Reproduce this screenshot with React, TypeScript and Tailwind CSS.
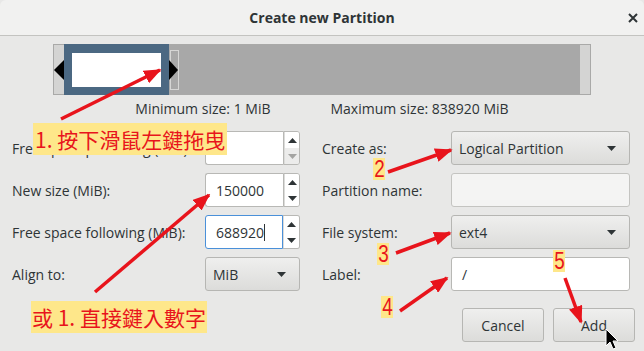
import React from 'react';

const ui = "font-['Open_Sans','Noto_Sans',sans-serif]";
const cjk = "font-['Noto_Sans_CJK_TC','Noto_Sans_CJK_SC',sans-serif]";

function Up({ dim }: { dim?: boolean }) {
  return (
    <svg width="9" height="5" viewBox="0 0 9 5">
      <path d="M0 5 L4.5 0 L9 5 Z" fill={dim ? '#a4a4a2' : '#2e3436'} />
    </svg>
  );
}

function Down({ dim }: { dim?: boolean }) {
  return (
    <svg width="9" height="5" viewBox="0 0 9 5">
      <path d="M0 0 L9 0 L4.5 5 Z" fill={dim ? '#a4a4a2' : '#2e3436'} />
    </svg>
  );
}

function Spin({ value, focused, downDisabled }: { value: string; focused?: boolean; downDisabled?: boolean }) {
  return (
    <div className="flex w-[95px] h-[34px]">
      <div
        className={`flex-1 flex items-center pl-[10px] bg-white rounded-l-[3px] border ${
          focused ? 'border-[#4a90d9]' : 'border-[#b8b8b5] border-r-0'
        }`}
      >
        {value}
        {focused && <span className="inline-block w-[1px] h-[17px] bg-[#2e3436]" />}
      </div>
      <div className={`w-[17px] flex flex-col rounded-r-[3px] border border-[#b8b8b5] overflow-hidden ${focused ? 'border-l-0' : ''}`}>
        <div className="flex-1 flex items-center justify-center bg-white border-l border-[#dcdcda]">
          <Up />
        </div>
        <div
          className={`flex-1 flex items-center justify-center border-l border-[#dcdcda] ${
            downDisabled ? 'bg-[#ececeb]' : 'bg-white'
          }`}
        >
          <Down dim={downDisabled} />
        </div>
      </div>
    </div>
  );
}

function Combo({ value, width }: { value: string; width: string }) {
  return (
    <div
      className={`${width} h-[34px] flex items-center justify-between pl-[7px] pr-[13px] rounded-[3px] border border-[#b6b6b3] bg-gradient-to-b from-[#efefee] to-[#dcdcda]`}
    >
      <span>{value}</span>
      <Down />
    </div>
  );
}

function Row({ label, children }: { label: string; children: React.ReactNode }) {
  return (
    <div className="flex items-center justify-between h-[34px]">
      <span>{label}</span>
      {children}
    </div>
  );
}

function PartitionBar() {
  return (
    <svg width="538" height="51" viewBox="0 0 538 51" className="mx-auto block">
      <rect x="0.5" y="0.5" width="537" height="50" fill="#d4d4d3" stroke="#a9a9a8" />
      <rect x="11" y="0" width="105" height="51" fill="#4b6882" />
      <rect x="19" y="9" width="89" height="34" fill="#ffffff" />
      <rect x="116" y="1" width="411" height="49" fill="#a8a8a8" />
      <rect x="117.5" y="6.5" width="8" height="39" fill="#a8a8a8" stroke="#d6d6d5" />
      <path d="M1 26 L11 16 L11 36 Z" fill="#000" />
      <path d="M116 16 L125 26 L116 36 Z" fill="#000" />
    </svg>
  );
}

function Num({ n, pos }: { n: string; pos: string }) {
  return (
    <span
      className={`absolute ${pos} w-[12px] h-[22px] flex items-center justify-center text-[23px] leading-[22px] text-[#e8141c] bg-[#fee78a] font-['Liberation_Sans',sans-serif]`}
    >
      <span className="inline-block scale-x-[0.82]">{n}</span>
    </span>
  );
}

export default function App() {
  return (
    <div className={`relative w-[644px] h-[351px] overflow-hidden bg-[#e8e8e7] text-[14px] text-[#2e3436] ${ui}`}>
      {/* Title bar */}
      <div className="relative h-[36px] flex items-center justify-center bg-[#f1f1f0] border-b border-[#c3c3c0] rounded-t-[6px]">
        <span className="font-bold text-[14px]">Create new Partition</span>
        <svg width="10" height="10" viewBox="0 0 10 10" className="absolute right-[6px] top-[13px]">
          <path d="M1 1 L9 9 M9 1 L1 9" stroke="#2e3436" strokeWidth="2" />
        </svg>
      </div>

      <div className="mt-[8px]">
        <PartitionBar />
      </div>

      <div className="flex justify-center gap-[60px] mt-[4px] leading-[20px]">
        <span>Minimum size: 1 MiB</span>
        <span>Maximum size: 838920 MiB</span>
      </div>

      {/* Form */}
      <div className="flex px-[12px] mt-[12px]">
        <div className="w-[288px] flex flex-col gap-[8px]">
          <Row label="Free space preceding (MiB):">
            <Spin value="" downDisabled />
          </Row>
          <Row label="New size (MiB):">
            <Spin value="150000" />
          </Row>
          <Row label="Free space following (MiB):">
            <Spin value="688920" focused />
          </Row>
          <Row label="Align to:">
            <Combo value="MiB" width="w-[95px]" />
          </Row>
        </div>
        <div className="w-[308px] ml-[22px] flex flex-col gap-[8px]">
          <Row label="Create as:">
            <Combo value="Logical Partition" width="w-[179px]" />
          </Row>
          <Row label="Partition name:">
            <div className="w-[179px] h-[34px] rounded-[3px] border border-[#c4c4c1] bg-[#f4f4f3]" />
          </Row>
          <Row label="File system:">
            <Combo value="ext4" width="w-[179px]" />
          </Row>
          <Row label="Label:">
            <div className="w-[179px] h-[34px] flex items-center pl-[10px] rounded-[3px] border border-[#b8b8b5] bg-white">/</div>
          </Row>
        </div>
      </div>

      <div className="flex justify-end gap-[9px] pr-[9px] mt-[17px]">
        <button className="w-[82px] h-[34px] rounded-[3px] border border-[#b6b6b3] bg-gradient-to-b from-[#efefee] to-[#dcdcda]">
          Cancel
        </button>
        <button className="w-[82px] h-[34px] rounded-[3px] border border-[#b6b6b3] bg-gradient-to-b from-[#efefee] to-[#dcdcda]">
          Add
        </button>
      </div>

      {/* Annotations */}
      <span className={`absolute left-[33px] top-[123px] h-[32px] px-[2px] leading-[32px] text-[21px] text-[#e8141c] bg-[#fee78a] ${cjk}`}>
        1. 按下滑鼠左鍵拖曳
      </span>
      <span className={`absolute left-[31px] top-[301px] h-[32px] px-[1px] leading-[32px] text-[21px] text-[#e8141c] bg-[#fee78a] ${cjk}`}>
        或 1. 直接鍵入數字
      </span>
      <Num n="2" pos="left-[373px] top-[158px]" />
      <Num n="3" pos="left-[377px] top-[243px]" />
      <Num n="4" pos="left-[381px] top-[296px]" />
      <Num n="5" pos="left-[553px] top-[250px]" />

      <svg width="644" height="351" className="absolute left-0 top-0 pointer-events-none">
        <defs>
          <marker id="ah" markerWidth="5" markerHeight="4" refX="4.5" refY="2" orient="auto" markerUnits="strokeWidth">
            <path d="M0 0 L5 2 L0 4 Z" fill="#e8141c" />
          </marker>
        </defs>
        <g stroke="#e8141c" strokeWidth="3.5" markerEnd="url(#ah)">
          <line x1="61" y1="119" x2="160" y2="70" />
          <line x1="95" y1="292" x2="209" y2="195" />
          <line x1="388" y1="172" x2="451" y2="150" />
          <line x1="396" y1="253" x2="450" y2="233" />
          <line x1="400" y1="311" x2="447" y2="278" />
          <line x1="565" y1="278" x2="581" y2="322" />
        </g>
        {/* mouse pointer */}
        <path
          d="M606 329 L606 346 L610 342 L613 349 L616 348 L613 341 L618 341 Z"
          fill="#000"
          stroke="#fff"
          strokeWidth="1"
          strokeLinejoin="round"
        />
      </svg>
    </div>
  );
}
